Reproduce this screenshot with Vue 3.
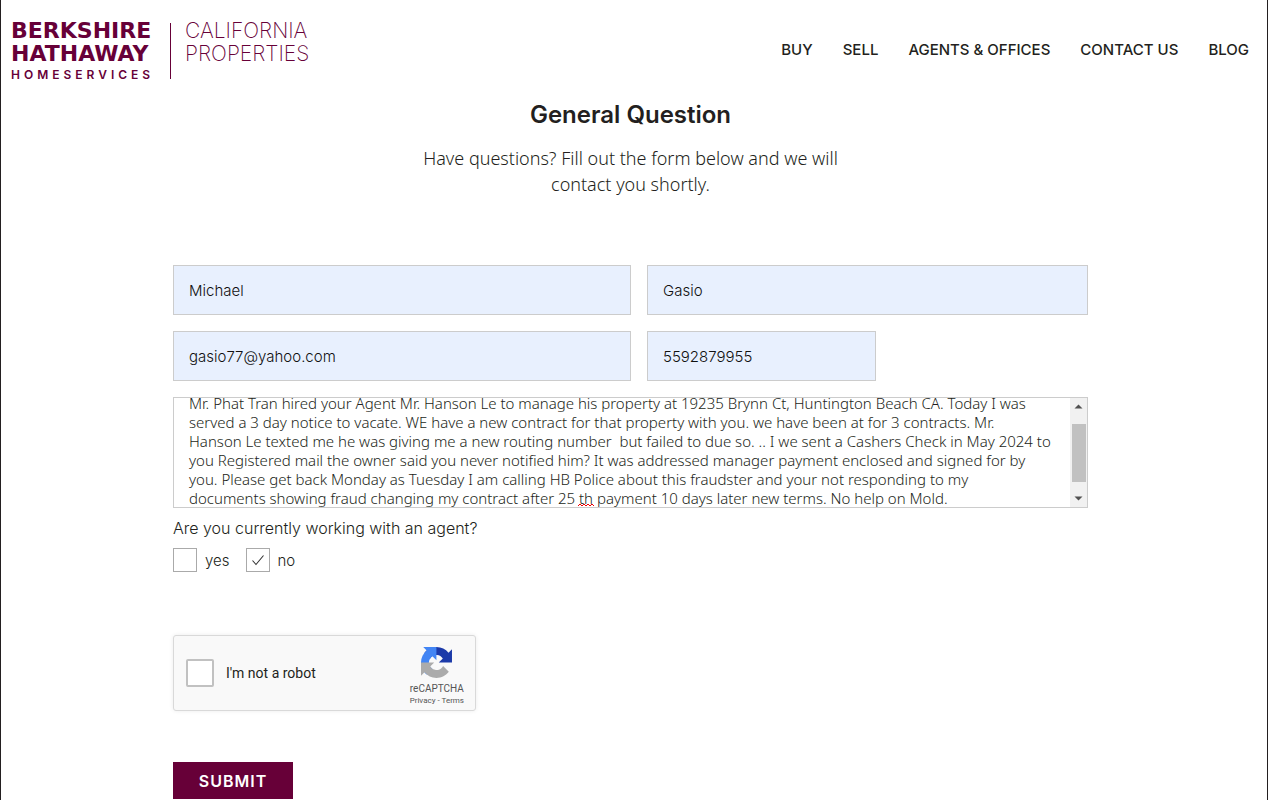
<script setup>
import { ref } from 'vue'

const links = ['BUY', 'SELL', 'AGENTS & OFFICES', 'CONTACT US', 'BLOG']

const firstName = ref('Michael')
const lastName = ref('Gasio')
const email = ref('gasio77@yahoo.com')
const phone = ref('5592879955')
const message = ref([
  'Mr. Phat Tran hired your Agent Mr. Hanson Le to manage his property at 19235 Brynn Ct, Huntington Beach CA. Today I was',
  'served a 3 day notice to vacate. WE have a new contract for that property with you. we have been at for 3 contracts. Mr.',
  'Hanson Le texted me he was giving me a new routing number  but failed to due so. .. I we sent a Cashers Check in May 2024 to',
  'you Registered mail the owner said you never notified him? It was addressed manager payment enclosed and signed for by',
  'you. Please get back Monday as Tuesday I am calling HB Police about this fraudster and your not responding to my',
  'documents showing fraud changing my contract after 25 th payment 10 days later new terms. No help on Mold.',
].join('\n'))
const agentYes = ref(false)
const agentNo = ref(true)
const human = ref(false)
</script>

<template>
  <div class="page">
    <header class="header">
      <a class="logo" href="#">
        <span class="brand">
          <span class="brand-line">BERKSHIRE</span>
          <span class="brand-line">HATHAWAY</span>
          <span class="brand-sub">HOMESERVICES</span>
        </span>
        <span class="rule"></span>
        <span class="region">
          <span>CALIFORNIA</span>
          <span>PROPERTIES</span>
        </span>
      </a>
      <nav class="nav">
        <a v-for="link in links" :key="link" href="#">{{ link }}</a>
      </nav>
    </header>

    <main class="main">
      <h1>General Question</h1>
      <p class="intro">Have questions? Fill out the form below and we will<br />contact you shortly.</p>

      <form class="form" @submit.prevent>
        <div class="fields">
          <input v-model="firstName" class="field" type="text" aria-label="First name" />
          <input v-model="lastName" class="field" type="text" aria-label="Last name" />
          <input v-model="email" class="field" type="email" aria-label="Email" />
          <input v-model="phone" class="field phone" type="tel" aria-label="Phone" />
        </div>

        <div class="message">
          <textarea v-model="message" rows="6" wrap="off" spellcheck="false" aria-label="Message"></textarea>
          <svg class="squiggle" width="16" height="4" viewBox="0 0 16 4" aria-hidden="true">
            <path d="M0 3L2 1L4 3L6 1L8 3L10 1L12 3L14 1L16 3" fill="none" stroke="#f00000" />
          </svg>
          <div class="scrollbar" aria-hidden="true">
            <svg width="9" height="5" viewBox="0 0 9 5"><path d="M0.5 4.5L4.5 0.5L8.5 4.5Z" fill="#505050" /></svg>
            <span class="thumb"></span>
            <svg width="9" height="5" viewBox="0 0 9 5"><path d="M0.5 0.5L4.5 4.5L8.5 0.5Z" fill="#505050" /></svg>
          </div>
        </div>

        <fieldset class="agent">
          <legend>Are you currently working with an agent?</legend>
          <div class="choices">
            <label><input v-model="agentYes" class="tick" type="checkbox" />yes</label>
            <label>
              <span class="tick-wrap">
                <input v-model="agentNo" class="tick" type="checkbox" />
                <svg v-if="agentNo" class="mark" width="12" height="12" viewBox="0 0 12 12" aria-hidden="true">
                  <path d="M0.5 6.5L4 10.5L11.5 1.5" fill="none" stroke="#333" stroke-width="1.1" />
                </svg>
              </span>no
            </label>
          </div>
        </fieldset>

        <div class="captcha">
          <label><input v-model="human" type="checkbox" />I'm not a robot</label>
          <div class="captcha-brand">
            <svg width="31" height="31" viewBox="0 0 64 64" aria-hidden="true">
              <path fill="#1c3aa9" d="M64 31.955l-.033-1.37V4.687l-7.16 7.16C50.948 4.674 42.033.093 32.05.093c-10.4 0-19.622 4.96-25.458 12.64l11.736 11.86a15.55 15.55 0 0 1 4.754-5.334c2.05-1.6 4.952-2.906 8.968-2.906.485 0 .86.057 1.135.163 4.976.393 9.288 3.14 11.828 7.124l-8.307 8.307L64 31.953" />
              <path fill="#4285f4" d="M31.862.094l-1.37.033H4.594l7.16 7.16C4.58 13.147 0 22.06 0 32.046c0 10.4 4.96 19.622 12.64 25.458L24.5 45.768a15.55 15.55 0 0 1-5.334-4.754c-1.6-2.05-2.906-4.952-2.906-8.968 0-.485.057-.86.163-1.135.393-4.976 3.14-9.288 7.124-11.828l8.307 8.307L31.86.095" />
              <path fill="#ababab" d="M.001 32.045l.033 1.37v25.898l7.16-7.16c5.86 7.173 14.774 11.754 24.76 11.754 10.4 0 19.622-4.96 25.458-12.64l-11.736-11.86a15.55 15.55 0 0 1-4.754 5.334c-2.05 1.6-4.952 2.906-8.968 2.906-.485 0-.86-.057-1.135-.163-4.976-.393-9.288-3.14-11.828-7.124l8.307-8.307c-10.522.04-22.4.066-27.295-.005" />
            </svg>
            <span class="captcha-name">reCAPTCHA</span>
            <span class="captcha-links"><a href="#">Privacy</a> - <a href="#">Terms</a></span>
          </div>
        </div>

        <button class="submit" type="submit">SUBMIT</button>
      </form>
    </main>
  </div>
</template>

<style>
body {
  background: #fff;
}
</style>

<style scoped>
.page {
  box-sizing: border-box;
  min-height: 100vh;
  border: solid #231f20;
  border-width: 0 1px;
  color: #231f20;
  font-family: Inter, "Liberation Sans", sans-serif;
}
.page * {
  box-sizing: border-box;
}
a {
  color: inherit;
  text-decoration: none;
}
.header {
  display: flex;
  align-items: center;
  justify-content: space-between;
  height: 99px;
  padding: 0 18px 0 10px;
}
.logo {
  display: flex;
  padding-top: 2px;
  color: #670038;
}
.brand {
  display: flex;
  flex-direction: column;
  width: 159px;
  font-family: "DejaVu Sans", sans-serif;
}
.brand-line {
  font-size: 22px;
  font-weight: 700;
  line-height: 23px;
}
.brand-sub {
  margin-top: 2px;
  font-family: Inter, sans-serif;
  font-size: 12px;
  font-weight: 600;
  line-height: 16px;
  letter-spacing: 4px;
}
.rule {
  align-self: center;
  width: 1px;
  height: 56px;
  background: #670038;
}
.region {
  display: flex;
  flex-direction: column;
  padding-left: 14px;
  font-size: 21px;
  font-weight: 200;
  line-height: 23px;
}
.nav {
  display: flex;
  gap: 30px;
  font-size: 15px;
  font-weight: 500;
}
.main {
  padding: 0 23px 0 16px;
}
h1 {
  margin: 0;
  font-size: 24px;
  font-weight: 600;
  line-height: 32px;
  text-align: center;
}
.intro {
  margin: 14px 0 68px;
  font-family: "Noto Sans", sans-serif;
  font-size: 18px;
  font-weight: 300;
  line-height: 26px;
  text-align: center;
}
.form {
  max-width: 915px;
  margin: 0 auto;
}
.fields {
  display: grid;
  grid-template-columns: 458fr 441fr;
  gap: 16px;
}
.field {
  width: 100%;
  height: 50px;
  padding: 0 15px;
  border: 1px solid #ccc;
  border-radius: 0;
  background: #e8f0fe;
  color: #111;
  font: 300 15px Inter, "Liberation Sans", sans-serif;
}
.phone {
  width: 52%;
}
.message {
  position: relative;
  display: flex;
  height: 111px;
  margin-top: 16px;
  border: 1px solid #ccc;
  overflow: hidden;
}
textarea {
  flex: 1;
  min-width: 0;
  height: 114px;
  margin-top: -4px;
  padding: 0 0 0 15px;
  border: 0;
  background: #fff;
  color: #231f20;
  font: 300 15px/19px "Noto Sans", sans-serif;
  overflow: hidden;
  resize: none;
}
.squiggle {
  position: absolute;
  left: 404px;
  bottom: 0;
}
.scrollbar {
  display: flex;
  flex-direction: column;
  align-items: center;
  justify-content: space-between;
  width: 17px;
  padding: 6px 0;
  background: #f1f1f1;
}
.thumb {
  width: 14px;
  height: 58px;
  background: #c1c1c1;
}
.agent {
  margin: 0;
  padding: 0;
  border: 0;
}
legend {
  padding: 9px 0;
  font-size: 16px;
  font-weight: 300;
  line-height: 22px;
}
.choices {
  display: flex;
  gap: 16px;
  font-size: 15px;
  font-weight: 300;
}
.choices label {
  display: flex;
  align-items: center;
  gap: 8px;
}
.tick-wrap {
  position: relative;
  display: flex;
}
.tick {
  appearance: none;
  width: 24px;
  height: 24px;
  margin: 0;
  border: 1px solid #aaa;
  background: #fff;
}
.mark {
  position: absolute;
  inset: 6px;
}
.captcha {
  display: flex;
  justify-content: space-between;
  width: 303px;
  height: 76px;
  margin-top: 63px;
  padding: 0 11px 0 12px;
  border: 1px solid #d9d9d9;
  border-radius: 3px;
  background: #f9f9f9;
  box-shadow: 0 0 4px rgba(0, 0, 0, 0.08);
  font-family: Roboto, sans-serif;
}
.captcha label {
  display: flex;
  align-items: center;
  gap: 12px;
  font-size: 14px;
}
.captcha input {
  appearance: none;
  width: 28px;
  height: 28px;
  margin: 0;
  border: 2px solid #c1c1c1;
  border-radius: 2px;
  background: #fff;
}
.captcha-brand {
  display: flex;
  flex-direction: column;
  align-items: center;
  padding-top: 11px;
  color: #555;
}
.captcha-name {
  margin-top: 4px;
  font-size: 10px;
  line-height: 13px;
}
.captcha-links {
  font-size: 8px;
  line-height: 11px;
}
.submit {
  display: block;
  width: 120px;
  height: 37px;
  margin-top: 51px;
  padding: 0;
  border: 0;
  background: #670038;
  color: #fff;
  font: 600 16px Inter, "Liberation Sans", sans-serif;
  letter-spacing: 1px;
}
</style>
